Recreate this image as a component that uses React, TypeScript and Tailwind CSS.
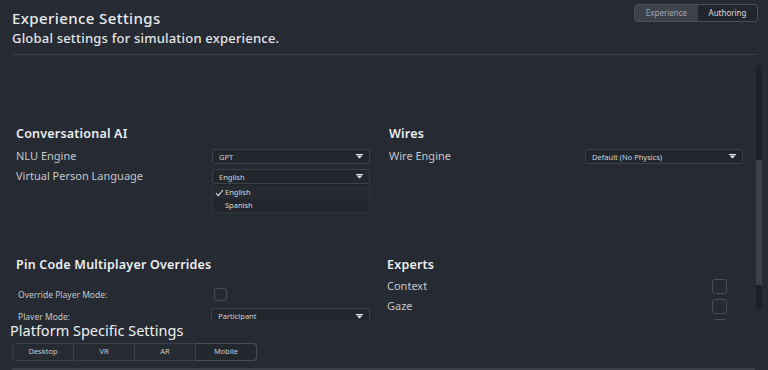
import React from "react";

const font = { fontFamily: '"Noto Sans", "Open Sans", sans-serif' };

function Caret() {
  return (
    <svg width="7" height="5" viewBox="0 0 7 5" className="shrink-0">
      <rect x="0" y="0" width="7" height="1" fill="#e6e7e9" />
      <path d="M0.5 1.5 H6.5 L3.5 4.5 Z" fill="#e6e7e9" />
    </svg>
  );
}

function Select({ value, className = "" }: { value: string; className?: string }) {
  return (
    <div
      className={`flex items-center justify-between h-[15px] bg-[#22262d] border border-[#3b414b] rounded-[2px] pl-[6px] pr-[6px] ${className}`}>
      <span className="text-[7.5px] leading-[10px] text-[#d3d5d8]">{value}</span>
      <Caret />
    </div>
  );
}

function Checkbox({ size = "w-[13px] h-[13px]" }: { size?: string }) {
  return <div className={`${size} border-[1.5px] border-[#484e58] rounded-[3px]`} />;
}

function Heading({ children }: { children: React.ReactNode }) {
  return (
    <h2 className="h-[16px] text-[12.5px] leading-[16px] font-semibold text-[#eceef0] tracking-[0.2px]">
      {children}
    </h2>
  );
}

export default function App() {
  const platforms = ["Desktop", "VR", "AR", "Mobile"];

  return (
    <div className="w-[768px] h-[370px] bg-[#262a32] overflow-hidden flex flex-col" style={font}>
      {/* header */}
      <div className="flex justify-between ml-[12px] mr-[10px] border-b border-[#3a3f48] h-[55px]">
        <div className="pt-[7px]">
          <h1 className="text-[15px] leading-[22px] font-medium text-[#e9eaec] tracking-[0.4px]">
            Experience Settings
          </h1>
          <p className="text-[13px] leading-[18px] font-medium text-[#e4e5e8] tracking-[0.2px]">
            Global settings for simulation experience.
          </p>
        </div>
        <div className="mt-[4px] h-[18px] flex rounded-[4px] border border-[#4a505a] bg-[#3c414b] overflow-hidden">
          <div className="w-[63px] flex items-center justify-center text-[8px] text-[#a3a8b0]">
            Experience
          </div>
          <div className="w-[59px] flex items-center justify-center text-[8px] text-[#d9dbde] bg-[#22262c]">
            Authoring
          </div>
        </div>
      </div>

      {/* scroll area */}
      <div className="flex h-[265px] overflow-hidden">
        <div className="flex-1 pl-[16px] pt-[71px]">
          <div className="grid grid-cols-[354px_356px] gap-x-[17px]">
            {/* Conversational AI */}
            <div className="h-[131px]">
              <Heading>Conversational AI</Heading>
              <div className="mt-[7px] flex items-center justify-between h-[15px]">
                <span className="text-[11px] text-[#c4c7cc]">NLU Engine</span>
                <Select value="GPT" className="w-[158px]" />
              </div>
              <div className="mt-[5px] flex items-center justify-between h-[15px]">
                <span className="text-[11px] text-[#c4c7cc]">Virtual Person Language</span>
                <div className="relative w-[158px]">
                  <Select value="English" />
                  <div className="absolute left-0 top-[15px] w-[158px] h-[29px] bg-[#22252b] border border-[#2f333a] border-t-0 rounded-b-[2px] pt-[2px]">
                    <div className="h-[13px] flex items-center bg-[#262a31] pl-[2px]">
                      <svg width="9" height="8" viewBox="0 0 9 8">
                        <path d="M1 4.2 L3.3 6.6 L8 1" stroke="#e4e6e8" strokeWidth="1.1" fill="none" />
                      </svg>
                      <span className="text-[7.5px] text-[#d8dadd] ml-[1px]">English</span>
                    </div>
                    <div className="h-[13px] flex items-center pl-[12px]">
                      <span className="text-[7.5px] text-[#d8dadd]">Spanish</span>
                    </div>
                  </div>
                </div>
              </div>
            </div>

            {/* Wires */}
            <div className="h-[131px] pl-[2px]">
              <Heading>Wires</Heading>
              <div className="mt-[7px] flex items-center justify-between h-[15px]">
                <span className="text-[11px] text-[#c4c7cc]">Wire Engine</span>
                <Select value="Default (No Physics)" className="w-[158px]" />
              </div>
            </div>

            {/* Pin Code Multiplayer Overrides */}
            <div>
              <Heading>Pin Code Multiplayer Overrides</Heading>
              <div className="mt-[15px] flex items-center h-[13px] pl-[2px]">
                <span className="w-[196px] text-[8.5px] leading-[12px] text-[#c4c7cc]">Override Player Mode:</span>
                <Checkbox />
              </div>
              <div className="mt-[8px] flex items-center h-[14px] pl-[2px]">
                <span className="w-[195px] text-[8.5px] leading-[11px] text-[#c4c7cc]">Player Mode:</span>
                <Select value="Participant" className="w-[160px] h-[16px]" />
              </div>
            </div>

            {/* Experts */}
            <div>
              <Heading>Experts</Heading>
              <div className="w-[340px] mt-[6px] flex flex-col gap-[5px]">
                {["Context", "Gaze", ""].map((name, i) => (
                  <div key={i} className="flex items-center justify-between h-[15px]">
                    <span className="text-[11px] text-[#c4c7cc]">{name}</span>
                    <Checkbox size="w-[15px] h-[15px]" />
                  </div>
                ))}
              </div>
            </div>
          </div>
        </div>

        {/* scrollbar */}
        <div className="w-[6px] mr-[6px] py-[10px]">
          <div className="h-full rounded-[3px] bg-[#1d2026] flex flex-col">
            <div className="h-[95px]" />
            <div className="h-[125px] bg-[#3b414b]" />
          </div>
        </div>
      </div>

      {/* platform settings */}
      <div className="pl-[10px]">
        <h3 className="text-[14.5px] leading-[20px] text-[#eef0f2]">Platform Specific Settings</h3>
        <div className="mt-[3px] ml-[2px] flex w-[245px] h-[18px]">
          {platforms.map((p, i) => (
            <div
              key={p}
              className={`flex-1 flex items-center justify-center text-[7.5px] text-[#c9ccd0] border border-[#3a404a] ${
                i === 0 ? "rounded-l-[4px]" : "border-l-0"
              } ${i === platforms.length - 1 ? "rounded-r-[4px] bg-[#23272e] border-[#4a505b]" : ""}`}>
              {p}
            </div>
          ))}
        </div>
      </div>
      <div className="mt-[7px] ml-[12px] w-[743px] h-[2px] bg-[#3a3f48]" />
    </div>
  );
}
